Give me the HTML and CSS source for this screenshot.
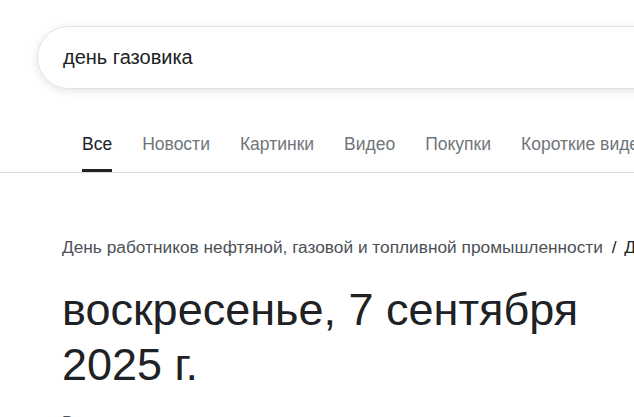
FILE: index.html
```html
<!DOCTYPE html>
<html lang="ru">
<head>
<meta charset="utf-8">
<title>день газовика - Поиск</title>
<link rel="stylesheet" href="styles.css">
</head>
<body>
<div class="page">
  <header class="header">
    <div class="search-box">
      <span class="search-text">день газовика</span>
    </div>
  </header>
  <nav class="tabs">
    <a class="tab tab-active">Все</a>
    <a class="tab">Новости</a>
    <a class="tab">Картинки</a>
    <a class="tab">Видео</a>
    <a class="tab">Покупки</a>
    <a class="tab">Короткие видео</a>
    <a class="tab">Ещё</a>
  </nav>
  <main class="content">
    <div class="breadcrumb">
      <span class="crumb">День работников нефтяной, газовой и топливной промышленности</span>
      <span class="sep">/</span>
      <span class="crumb-last">Дата в 2025 году</span>
    </div>
    <h1 class="answer">воскресенье, 7 сентября 2025 г.</h1>
    <p class="note">В этот день поздравляют всех газовиков</p>
  </main>
</div>
</body>
</html>
```
FILE: styles.css
```css
html, body {
  margin: 0;
  padding: 0;
  background: #fff;
  overflow: hidden;
}
body {
  font-family: "Liberation Sans", Arial, sans-serif;
  color: #202124;
}
.page {
  width: 900px;
}
.header {
  padding: 26px 0 0 37px;
}
.search-box {
  box-sizing: border-box;
  height: 63px;
  width: 820px;
  border: 1px solid #dfe1e5;
  border-radius: 32px;
  box-shadow: 0 2px 8px rgba(32, 33, 36, 0.12);
  display: flex;
  align-items: center;
  padding-left: 25px;
}
.search-text {
  font-size: 20px;
  color: #202124;
}
.tabs {
  display: flex;
  gap: 30px;
  padding-left: 82px;
  margin-top: 44px;
  border-bottom: 1px solid #dadce0;
  white-space: nowrap;
}
.tab {
  font-size: 17.5px;
  color: #70757a;
  padding-bottom: 14px;
  border-bottom: 3px solid transparent;
  line-height: 22px;
}
.tab-active {
  color: #202124;
  border-bottom-color: #202124;
}
.content {
  padding-left: 62px;
}
.breadcrumb {
  margin-top: 62px;
  font-size: 17.3px;
  line-height: 24px;
  color: #4d5156;
  white-space: nowrap;
}
.sep {
  color: #202124;
  margin: 0 3px 0 4px;
}
.crumb-last {
  color: #202124;
}
.answer {
  margin: 23px 0 0;
  max-width: 560px;
  font-size: 45px;
  line-height: 55px;
  font-weight: 400;
  color: #202124;
}
.note {
  margin: 21px 0 0;
  font-size: 17px;
  color: #4d5156;
}
```
